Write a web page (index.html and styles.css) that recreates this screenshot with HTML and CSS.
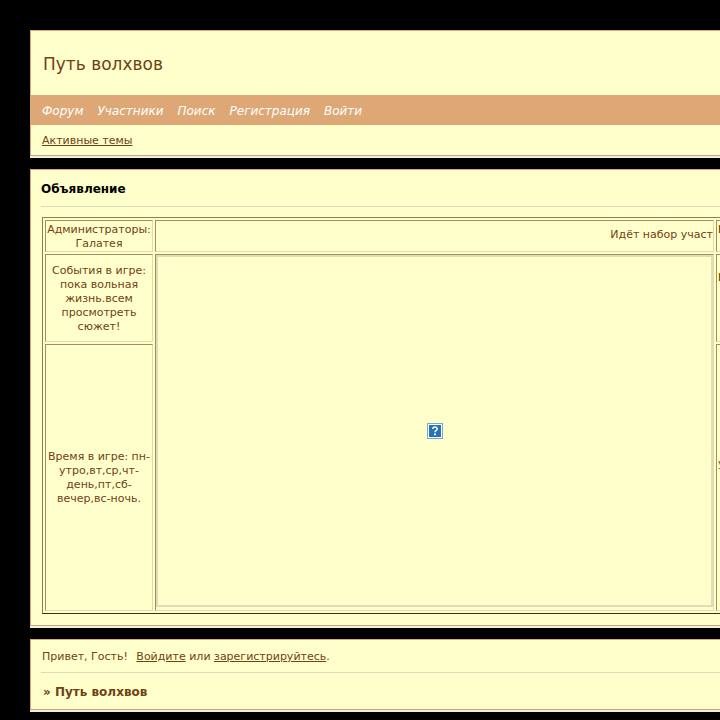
FILE: index.html
```html
<!DOCTYPE html>
<html lang="ru">
<head>
    <meta charset="UTF-8">
    <meta name="viewport" content="width=device-width, initial-scale=1.0">
    <title>Путь волхвов</title>
    <link rel="stylesheet" href="styles.css">
</head>
<body>
    <div class="forum">
        <header class="panel">
            <h1 class="title">Путь волхвов</h1>
            <nav class="navlinks">
                <a href="#">Форум</a>
                <a href="#">Участники</a>
                <a href="#">Поиск</a>
                <a href="#">Регистрация</a>
                <a href="#">Войти</a>
            </nav>
            <p class="sublinks"><a href="#">Активные темы</a></p>
        </header>

        <section class="panel announcement">
            <h2>Объявление</h2>
            <table class="info">
                <colgroup>
                    <col class="side">
                    <col>
                    <col class="side">
                </colgroup>
                <tr class="row-admins">
                    <td>Администраторы: Галатея</td>
                    <td class="ticker">Идёт набор участ</td>
                    <td class="last"><b>Ник:</b><br>&nbsp;</td>
                </tr>
                <tr class="row-events">
                    <td>События в игре: пока вольная жизнь.всем просмотреть сюжет!</td>
                    <td class="banner" rowspan="2">
                        <div class="frame">
                            <svg class="missing" width="16" height="16" viewBox="0 0 16 16">
                                <rect x="0.5" y="0.5" width="15" height="15" fill="#fff" stroke="#7fa6c8"/>
                                <rect x="2" y="2" width="12" height="12" fill="#2673b8"/>
                                <path d="M5.8 6V5.3Q6.2 4 8 4T10.2 5.7Q10.2 6.9 8.9 7.6Q8 8.1 8 9.3" fill="none" stroke="#fff" stroke-width="1.5"/>
                                <rect x="7" y="10.5" width="2" height="1.7" fill="#fff"/>
                            </svg>
                        </div>
                    </td>
                    <td class="last"><b>Погода:</b><br><br><br>&nbsp;</td>
                </tr>
                <tr class="row-time">
                    <td>Время в игре: пн-утро,вт,ср,чт-день,пт,сб-вечер,вс-ночь.</td>
                    <td class="last">утро<br><br>&nbsp;</td>
                </tr>
            </table>
        </section>

        <section class="panel status">
            <p class="welcome">Привет, Гость! <span class="auth"><a href="#">Войдите</a> или <a href="#">зарегистрируйтесь</a>.</span></p>
            <p class="crumbs">» <a href="#">Путь волхвов</a></p>
        </section>
    </div>
</body>
</html>
```

FILE: styles.css
```css
body {
    margin: 0;
    background-color: #000;
    color: #704214;
    font: 11px/14px "DejaVu Sans", Verdana, sans-serif;
    overflow: hidden;
}
h1, h2, p { margin: 0; }
a { color: #704214; }

.forum {
    display: flex;
    flex-direction: column;
    gap: 13px;
    min-width: 809px;
    padding: 30px;
}
.panel {
    background-color: #ffffcc;
    border: 1px solid #dba876;
    border-bottom-color: #c4a582;
    box-shadow: 0 2px 0 #f4eedc;
}

/* header */
.title {
    padding: 2px 12px 0;
    font-size: 17px;
    font-weight: normal;
    line-height: 62px;
}
.navlinks {
    display: flex;
    gap: 14px;
    padding: 2px 11px 0;
    background-color: #dda876;
    line-height: 28px;
}
.navlinks a {
    color: #fff;
    font-size: 12px;
    font-style: italic;
    text-decoration: none;
}
.sublinks {
    padding: 2px 11px 0;
    line-height: 28px;
}

/* announcement */
.announcement { padding: 0 10px 11px; }
.announcement h2 {
    margin-bottom: 10px;
    padding-top: 2px;
    border-bottom: 1px solid #dcdcb8;
    color: #000;
    font-size: 12px;
    line-height: 34px;
}
.info {
    width: calc(100% - 2px);
    margin: 0 1px;
    table-layout: fixed;
    border: 1px solid;
    border-color: #85805c #33301c #33301c #85805c;
    border-collapse: separate;
    border-spacing: 2px;
    text-align: center;
}
.side { width: 108px; }
.info td {
    padding: 2px 1px 0;
    border: 1px solid;
    border-color: #a0905c #e6dcaa #e6dcaa #a0905c;
    overflow: hidden;
}
.info .ticker {
    padding: 0 0 2px;
    text-align: right;
    white-space: nowrap;
}
.info .banner { padding: 0; }
.info .last { text-align: left; }
.row-admins { height: 32px; }
.row-events { height: 88px; }
.row-time { height: 267px; }
.row-time td { padding: 1px; }
.frame {
    display: flex;
    align-items: center;
    justify-content: center;
    height: 348px;
    margin-bottom: 3px;
    border: 2px solid #e2dcb6;
}

/* status */
.status { padding: 0 10px; }
.welcome {
    padding: 2px 1px 0;
    border-bottom: 1px solid #dcdcb8;
    line-height: 30px;
}
.auth { margin-left: 5px; }
.crumbs {
    padding: 2px 2px 0;
    font-size: 12px;
    font-weight: bold;
    line-height: 34px;
}
.crumbs a { text-decoration: none; }
```
